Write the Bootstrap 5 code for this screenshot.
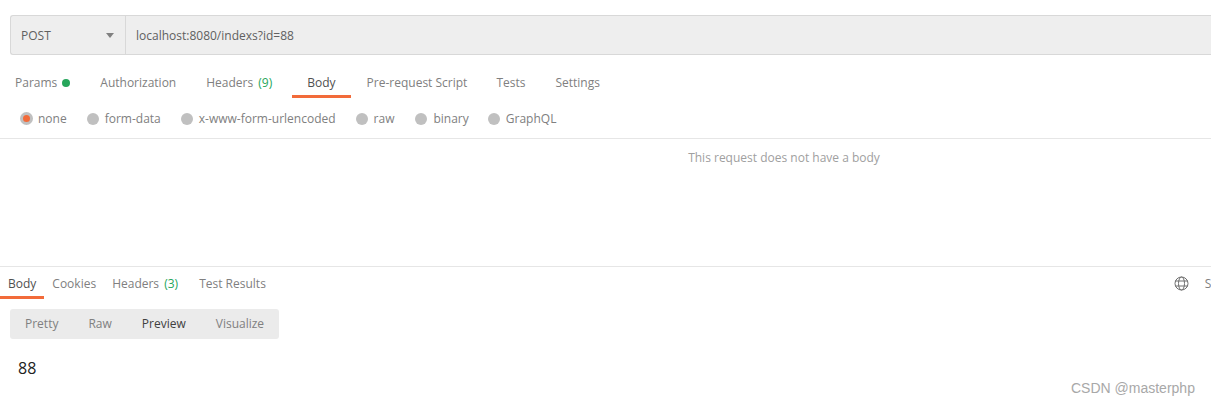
<!DOCTYPE html>
<html lang="en">
<head>
<meta charset="utf-8">
<title>Postman request</title>
<link href="https://cdn.jsdelivr.net/npm/bootstrap@5.3.0/dist/css/bootstrap.min.css" rel="stylesheet">
<style>
html,body{height:405px;overflow:hidden;background:#fff}
body{font-family:"Open Sans",sans-serif;font-size:12px;color:#808080;line-height:16px;position:relative}
.app-frame{width:1568px}
.req-bar{margin:15px 0 0 10px;height:40px;background:#eee;border:1px solid #d8d8d8;border-right:0;border-radius:3px 0 0 3px;color:#606060}
.method-box{width:115px;padding:1px 11px 0 10px;border-right:1px solid #d8d8d8;font-weight:500;color:#606060}
.caret-mark{width:0;height:0;border-left:4.5px solid transparent;border-right:4.5px solid transparent;border-top:5px solid #808080}
.url-text{padding:1px 0 0 10px;color:#606060}
.req-tabs{height:43px;padding-left:15px}
.tab-item{height:43px;padding-top:20px;position:relative;white-space:nowrap;margin-left:30px}
.tab-item:first-child{margin-left:0}
.tab-on{color:#505050;margin-left:35px}
.tab-after-on{margin-left:31px}
.tab-tests{margin-left:29px}
.tab-on::after{content:"";position:absolute;left:-15px;right:-15px;bottom:0;height:3px;background:#f26b3a}
.count-green{color:#26a65b;margin-left:2px}
.dot-green{width:8px;height:8px;border-radius:50%;background:#26a65b;margin-left:5px;display:inline-block}
.body-modes{height:41px;padding:1px 0 0 20px;border-bottom:1px solid #e6e6e6}
.radio-off{width:12px;height:12px;border-radius:50%;background:#c0c0c0;margin:0 6px 0 20px;flex:none}
.radio-on{width:13px;height:13px;background:#f26b3a;border:3px solid #c0c0c0;margin:0 5px 0 0}
.radio-wider{margin-left:21px}
.radio-narrow{margin-left:19px}
.empty-msg{height:128px;padding-top:11px;text-align:center;color:#a0a0a0;border-bottom:1px solid #e6e6e6}
.res-tabs{height:32px}
.res-tab{height:32px;padding-top:9px;position:relative;white-space:nowrap;margin-left:16px}
.res-tab:first-child{margin-left:0}
.res-tab-wide{margin-left:21px}
.res-on{color:#505050}
.res-on::after{content:"";position:absolute;left:-8px;right:-8px;bottom:0;height:3px;background:#f26b3a}
.globe-mark{margin-left:auto;margin-top:9px}
.save-link{margin-left:16px;margin-right:280px;padding-top:9px;white-space:nowrap}
.view-switch{margin:10px 0 0 10px;width:269px;height:30px;background:#ebebeb;border-radius:3px;padding-left:15px}
.view-item{white-space:nowrap;margin-left:30px}
.view-item:first-child{margin-left:0}
.view-on{color:#404040}
.res-value{margin:18px 0 0 18px;font-size:16px;line-height:22px;color:#222}
.csdn-mark{position:absolute;left:1071px;top:379px;font-family:"Liberation Sans",sans-serif;font-size:14px;line-height:18px;color:#a8a8a8;white-space:nowrap}
</style>
</head>
<body>
<div class="app-frame">
  <div class="req-bar d-flex align-items-center">
    <div class="method-box h-100 d-flex align-items-center justify-content-between"><span>POST</span><span class="caret-mark"></span></div>
    <div class="url-text">localhost:8080/indexs?id=88</div>
  </div>
  <div class="req-tabs d-flex">
    <div class="tab-item">Params<span class="dot-green"></span></div>
    <div class="tab-item">Authorization</div>
    <div class="tab-item">Headers <span class="count-green">(9)</span></div>
    <div class="tab-item tab-on">Body</div>
    <div class="tab-item tab-after-on">Pre-request Script</div>
    <div class="tab-item tab-tests">Tests</div>
    <div class="tab-item">Settings</div>
  </div>
  <div class="body-modes d-flex align-items-center">
    <span class="radio-off radio-on"></span><span>none</span>
    <span class="radio-off"></span><span>form-data</span>
    <span class="radio-off"></span><span>x-www-form-urlencoded</span>
    <span class="radio-off"></span><span>raw</span>
    <span class="radio-off radio-wider"></span><span>binary</span>
    <span class="radio-off radio-narrow"></span><span>GraphQL</span>
  </div>
  <div class="empty-msg">This request does not have a body</div>
  <div class="res-tabs d-flex ps-2">
    <div class="res-tab res-on">Body</div>
    <div class="res-tab">Cookies</div>
    <div class="res-tab">Headers <span class="count-green">(3)</span></div>
    <div class="res-tab res-tab-wide">Test Results</div>
    <svg class="globe-mark" width="15" height="15" viewBox="0 0 15 15" fill="none" stroke="#707070" stroke-width="1"><circle cx="7.5" cy="7.5" r="6.5"/><ellipse cx="7.5" cy="7.5" rx="3" ry="6.5"/><path d="M1 5h13M1 10h13"/></svg>
    <div class="save-link">Save Response</div>
  </div>
  <div class="view-switch d-flex align-items-center">
    <span class="view-item">Pretty</span>
    <span class="view-item">Raw</span>
    <span class="view-item view-on">Preview</span>
    <span class="view-item">Visualize</span>
  </div>
  <div class="res-value">88</div>
</div>
<div class="csdn-mark">CSDN @masterphp</div>
<script src="https://cdn.jsdelivr.net/npm/bootstrap@5.3.0/dist/js/bootstrap.bundle.min.js"></script>
</body>
</html>
